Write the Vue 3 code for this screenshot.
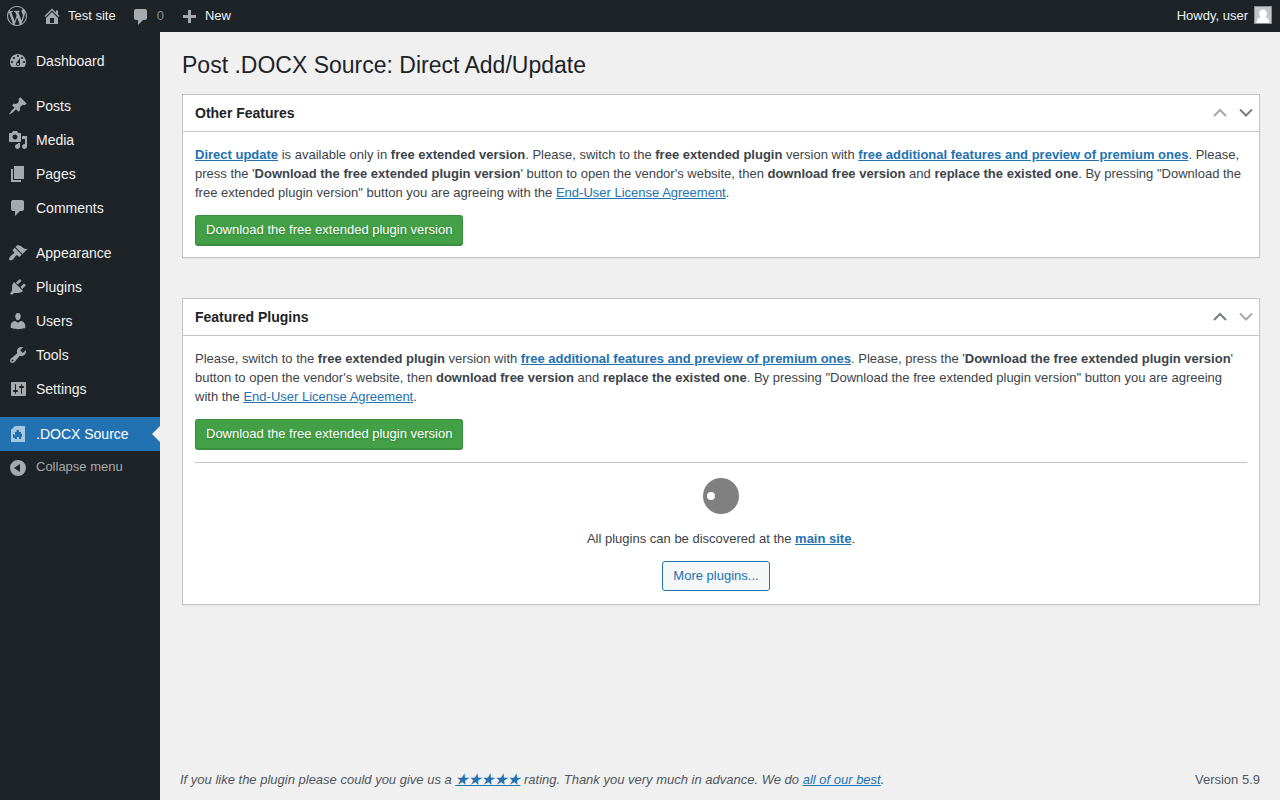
<script setup>
import { ref } from 'vue'

const commentPath = 'M5 2h9c1.1 0 2 .9 2 2v7c0 1.1-.9 2-2 2h-2l-5 5v-5H5c-1.1 0-2-.9-2-2V4c0-1.1.9-2 2-2z'
const plusPath = 'M17 7v3h-5v5H9v-5H4V7h5V2h3v5h5z'
const homePath = 'M16 8.5l1.53 1.53-1.06 1.06L10 4.6l-6.47 6.49-1.06-1.06L10 2.5l4 4v-2h2v4zm-6-2.46l6 5.99V18H4v-5.97zM12 17v-5H8v5h4z'
const wordpressPath = 'M20 10c0-5.51-4.49-10-10-10C4.48 0 0 4.49 0 10c0 5.52 4.48 10 10 10 5.51 0 10-4.48 10-10zM7.78 15.37L4.37 6.22c.55-.02 1.17-.08 1.17-.08.5-.06.44-1.13-.06-1.11 0 0-1.45.11-2.37.11-.18 0-.37 0-.58-.01C4.12 2.69 6.87 1.11 10 1.11c2.33 0 4.45.87 6.05 2.34-.68-.11-1.65.39-1.65 1.58 0 .74.45 1.36.9 2.1.35.61.55 1.36.55 2.46 0 1.49-1.4 5-1.4 5l-3.03-8.37c.54-.02.82-.17.82-.17.5-.05.44-1.25-.06-1.22 0 0-1.44.12-2.38.12-.87 0-2.33-.12-2.33-.12-.5-.03-.56 1.2-.06 1.22l.92.08 1.26 3.41zM17.41 10c.24-.64.74-1.87.43-4.25.7 1.29 1.05 2.71 1.05 4.25 0 3.29-1.73 6.24-4.4 7.78.97-2.59 1.94-5.2 2.92-7.78zM6.1 18.09C3.12 16.65 1.11 13.53 1.11 10c0-1.3.23-2.48.72-3.59C3.25 10.3 4.67 14.2 6.1 18.09zm4.03-6.63l2.58 6.98c-.86.29-1.76.45-2.71.45-.79 0-1.57-.11-2.29-.33.81-2.38 1.62-4.74 2.42-7.10z'

// menu groups, drawn with a gap between each one
const menu = [
  [
    {
      name: 'Dashboard',
      icon: 'M3.76 16h12.48c1.1-1.37 1.76-3.11 1.76-5 0-4.42-3.58-8-8-8s-8 3.58-8 8c0 1.89.66 3.63 1.76 5zM10 4c.55 0 1 .45 1 1s-.45 1-1 1-1-.45-1-1 .45-1 1-1zM6 6c.55 0 1 .45 1 1s-.45 1-1 1-1-.45-1-1 .45-1 1-1zm8 0c.55 0 1 .45 1 1s-.45 1-1 1-1-.45-1-1 .45-1 1-1zm-5.37 5.55L12 7v6c0 1.1-.9 2-2 2s-2-.9-2-2c0-.57.24-1.08.63-1.45zM4 10c.55 0 1 .45 1 1s-.45 1-1 1-1-.45-1-1 .45-1 1-1zm12 0c.55 0 1 .45 1 1s-.45 1-1 1-1-.45-1-1 .45-1 1-1zm-5 3c0-.55-.45-1-1-1s-1 .45-1 1 .45 1 1 1 1-.45 1-1z'
    }
  ],
  [
    {
      name: 'Posts',
      icon: 'M10.44 3.02l1.82-1.82 6.36 6.35-1.83 1.82c-1.05-.68-2.48-.57-3.41.36l-.75.75c-.92.93-1.04 2.35-.35 3.41l-1.83 1.82-2.41-2.41-2.8 2.79c-.42.42-3.38 2.71-3.8 2.29s1.86-3.39 2.28-3.81l2.79-2.79L4.1 9.36l1.83-1.82c1.05.69 2.48.57 3.4-.36l.75-.75c.93-.92 1.05-2.35.36-3.41z'
    },
    {
      name: 'Media',
      icon: 'M13 11V4c0-.55-.45-1-1-1h-1.67L9 1H5L3.67 3H2c-.55 0-1 .45-1 1v7c0 .55.45 1 1 1h10c.55 0 1-.45 1-1zM7 4.5c1.38 0 2.5 1.12 2.5 2.5S8.38 9.5 7 9.5 4.5 8.38 4.5 7 5.62 4.5 7 4.5zM14 6h5v10.5c0 1.38-1.12 2.5-2.5 2.5S14 17.88 14 16.5s1.12-2.5 2.5-2.5c.17 0 .34.02.5.05V9h-3V6zm-4 8.05V13h2v3.5c0 1.38-1.12 2.5-2.5 2.5S7 17.88 7 16.5 8.12 14 9.5 14c.17 0 .34.02.5.05z'
    },
    { name: 'Pages', icon: 'M6 15V2h10v13H6zm-1 1h8v2H3V5h2v11z' },
    { name: 'Comments', icon: commentPath }
  ],
  [
    {
      name: 'Appearance',
      icon: 'M14.48 11.06L7.41 3.99l1.5-1.5c.5-.56 2.3-.47 3.51.32 1.21.8 1.43 1.28 2.91 2.1 1.18.64 2.45 1.26 4.45.85zm-.71.71L6.7 4.7 4.93 6.47c-.39.39-.39 1.02 0 1.41l1.06 1.06c.39.39.39 1.03 0 1.42-.6.6-1.43 1.11-2.21 1.69-.35.26-.7.53-1.01.84C1.43 14.23.4 16.08 1.4 17.07c.99 1 2.84-.03 4.18-1.36.31-.31.58-.66.85-1.02.57-.78 1.08-1.61 1.69-2.21.39-.39 1.02-.39 1.41 0l1.06 1.06c.39.39 1.02.39 1.41 0z'
    },
    {
      name: 'Plugins',
      icon: 'M13.11 4.36L9.87 7.6 8 5.73l3.24-3.24c.35-.34 1.05-.2 1.56.32.52.51.66 1.21.31 1.55zm-8 1.77l.91-1.12 9.01 9.01-1.19.84c-.71.71-2.63 1.16-3.82 1.16H6.14L4.9 17.26c-.59.59-1.54.59-2.12 0-.59-.58-.59-1.53 0-2.12l1.24-1.24v-3.88c0-1.13.4-3.19 1.09-3.89zm7.26 3.97l3.24-3.24c.34-.35 1.04-.21 1.55.31.52.51.66 1.21.31 1.55l-3.24 3.25z'
    },
    {
      name: 'Users',
      icon: 'M10 9.25c-2.27 0-2.73-3.44-2.73-3.44C7 4.02 7.82 2 9.97 2c2.16 0 2.98 2.02 2.71 3.81 0 0-.41 3.44-2.68 3.44zm0 2.57L12.72 10c2.39 0 4.52 2.33 4.52 4.53v2.49s-3.65 1.13-7.24 1.13c-3.65 0-7.24-1.13-7.24-1.13v-2.49c0-2.25 1.94-4.48 4.47-4.48z'
    },
    {
      name: 'Tools',
      icon: 'M16.68 9.77c-1.34 1.34-3.3 1.67-4.95.99l-5.41 6.52c-.99.99-2.59.99-3.58 0s-.99-2.59 0-3.57l6.52-5.42c-.68-1.65-.35-3.61.99-4.95 1.28-1.28 3.12-1.62 4.72-1.06l-2.89 2.89 2.82 2.82 2.86-2.87c.53 1.58.18 3.39-1.08 4.65zM3.81 16.21c.4.39 1.04.39 1.43 0 .4-.4.4-1.04 0-1.43-.39-.4-1.03-.4-1.43 0-.39.39-.39 1.03 0 1.43z'
    },
    {
      name: 'Settings',
      icon: 'M18 16V4c0-.55-.45-1-1-1H4c-.55 0-1 .45-1 1v12c0 .55.45 1 1 1h13c.55 0 1-.45 1-1zM8 11h1c.55 0 1 .45 1 1s-.45 1-1 1H8v1.5c0 .28-.22.5-.5.5s-.5-.22-.5-.5V13H6c-.55 0-1-.45-1-1s.45-1 1-1h1V5.5c0-.28.22-.5.5-.5s.5.22.5.5V11zm5-2h-1c-.55 0-1-.45-1-1s.45-1 1-1h1V5.5c0-.28.22-.5.5-.5s.5.22.5.5V7h1c.55 0 1 .45 1 1s-.45 1-1 1h-1v5.500c0 .28-.22.5-.5.5s-.5-.22-.5-.5V9z'
    }
  ],
  [
    {
      name: '.DOCX Source',
      icon: 'M7 2h10v16H3V6zM8.500 6v2H7v3H6v-1H5v4h2v1h2v-2h2v2h2v-2h1v-3h-1V8h-2V6z'
    }
  ]
]

const current = ref('.DOCX Source')
</script>

<template>
  <div class="admin">
    <header class="adminBar">
      <a class="barItem logo" href="#" aria-label="About WordPress">
        <svg class="icon" viewBox="0 0 20 20"><path :d="wordpressPath" /></svg>
      </a>
      <a class="barItem" href="#">
        <svg class="icon" viewBox="0 0 20 20"><path :d="homePath" /></svg>
        Test site
      </a>
      <a class="barItem comments" href="#">
        <svg class="icon" viewBox="0 -1 20 20"><path :d="commentPath" /></svg>
        <span class="count">0</span>
      </a>
      <a class="barItem new" href="#">
        <svg class="icon" viewBox="0 -2 20 20"><path :d="plusPath" /></svg>
        New
      </a>
      <a class="barItem account" href="#">
        Howdy, user
        <svg class="avatar" viewBox="0 0 16 16">
          <rect width="16" height="16" fill="#c5c5c5" />
          <path fill="#fff" d="M8 2.600c2.400 0 3.900 1.700 3.900 4 0 1.500-.7 2.700-1.500 3.500 2.300.7 3.900 2.600 4.100 5.900h-13c.2-3.300 1.800-5.200 4.100-5.900-.8-.8-1.500-2-1.500-3.500 0-2.300 1.500-4 3.900-4z" />
        </svg>
      </a>
    </header>

    <div class="main">
      <nav class="sideMenu">
        <ul v-for="(group, i) in menu" :key="i" class="menuGroup">
          <li v-for="item in group" :key="item.name">
            <a
              href="#"
              class="menuItem"
              :class="{ current: item.name === current }"
              @click.prevent="current = item.name"
            >
              <svg class="icon" viewBox="0 0 20 20"><path fill-rule="evenodd" :d="item.icon" /></svg>
              {{ item.name }}
            </a>
          </li>
        </ul>
        <button class="collapse" type="button">
          <svg class="icon" viewBox="0 0 20 20">
            <path fill-rule="evenodd" d="M10 2a8 8 0 1 1 0 16 8 8 0 0 1 0-16zM12 6v8l-6-4z" />
          </svg>
          <span>Collapse menu</span>
        </button>
      </nav>

      <div class="content">
        <main class="wrap">
          <h1>Post .DOCX Source: Direct Add/Update</h1>

          <section class="postbox">
            <div class="postboxHeader">
              <h2>Other Features</h2>
              <div class="orderButtons">
                <button type="button" disabled aria-label="Move up">
                  <svg viewBox="0 0 16 16"><path d="M2 11l6-6 6 6" /></svg>
                </button>
                <button type="button" aria-label="Move down">
                  <svg viewBox="0 0 16 16"><path d="M2 4.500l6 6 6-6" /></svg>
                </button>
              </div>
            </div>
            <div class="inside">
              <p>
                <a href="#"><b>Direct update</b></a> is available only in <b>free extended version</b>.
                Please, switch to the <b>free extended plugin</b> version with
                <a href="#"><b>free additional features and preview of premium ones</b></a>.
                Please, press the '<b>Download the free extended plugin version</b>' button to open the vendor's website,
                then <b>download free version</b> and <b>replace the existed one</b>.
                By pressing "Download the free extended plugin version" button you are agreeing with the
                <a href="#">End-User License Agreement</a>.
              </p>
              <button class="download" type="button">Download the free extended plugin version</button>
            </div>
          </section>

          <section class="postbox">
            <div class="postboxHeader">
              <h2>Featured Plugins</h2>
              <div class="orderButtons">
                <button type="button" aria-label="Move up">
                  <svg viewBox="0 0 16 16"><path d="M2 11l6-6 6 6" /></svg>
                </button>
                <button type="button" disabled aria-label="Move down">
                  <svg viewBox="0 0 16 16"><path d="M2 4.500l6 6 6-6" /></svg>
                </button>
              </div>
            </div>
            <div class="inside">
              <p>
                Please, switch to the <b>free extended plugin</b> version with
                <a href="#"><b>free additional features and preview of premium ones</b></a>.
                Please, press the '<b>Download the free extended plugin version</b>' button to open the vendor's website,
                then <b>download free version</b> and <b>replace the existed one</b>.
                By pressing "Download the free extended plugin version" button you are agreeing with the
                <a href="#">End-User License Agreement</a>.
              </p>
              <button class="download" type="button">Download the free extended plugin version</button>
              <div class="discover">
                <svg class="spinner" viewBox="0 0 36 36">
                  <circle cx="18" cy="18" r="18" fill="#808080" />
                  <circle cx="8" cy="18" r="4" fill="#fff" />
                </svg>
                <p>All plugins can be discovered at the <a href="#"><b>main site</b></a>.</p>
                <button class="more" type="button">More plugins...</button>
              </div>
            </div>
          </section>
        </main>

        <footer class="footer">
          <em>
            If you like the plugin please could you give us a
            <a href="#" class="stars">★★★★★</a>
            rating. Thank you very much in advance. We do <a href="#">all of our best</a>.
          </em>
          <span>Version 5.9</span>
        </footer>
      </div>
    </div>
  </div>
</template>

<style>
body {
  margin: 0;
  background: #f0f0f1;
}
</style>

<style scoped>
.admin {
  display: flex;
  flex-direction: column;
  min-height: 100vh;
  color: #3c434a;
  background: #f0f0f1;
  font-family: "Liberation Sans", Arial, sans-serif;
  font-size: 13px;
  line-height: 19px;
}
button {
  font-family: inherit;
  font-size: 13px;
  cursor: pointer;
}
a {
  color: #2271b1;
}
.icon {
  flex: none;
  width: 20px;
  height: 20px;
  fill: #a7aaad;
}

/* top bar */
.adminBar {
  display: flex;
  height: 32px;
  padding-right: 8px;
  background: #1d2327;
}
.barItem {
  display: flex;
  align-items: center;
  gap: 6px;
  padding: 0 8px;
  color: #f0f0f1;
  line-height: 32px;
  text-decoration: none;
}
.logo {
  padding: 0 7px;
}
.count {
  color: #8c8f94;
}
.comments,
.new {
  padding-left: 7px;
}
.account {
  margin-left: auto;
  padding: 0;
}
.avatar {
  width: 16px;
  height: 16px;
  margin-bottom: 2px;
  border: 1px solid #8c8f94;
}

/* left menu */
.main {
  display: flex;
  flex: 1;
}
.sideMenu {
  flex: none;
  width: 160px;
  padding-top: 12px;
  background: #1d2327;
}
.menuGroup {
  margin: 0;
  padding: 0;
  list-style: none;
}
.menuGroup + .menuGroup {
  margin-top: 11px;
}
.menuItem,
.collapse {
  position: relative;
  display: flex;
  align-items: center;
  gap: 8px;
  height: 34px;
  padding: 0 8px;
  color: #f0f0f1;
  font-size: 14px;
  text-decoration: none;
}
.current {
  color: #fff;
  background: #2271b1;
}
.current .icon {
  fill: #a7c6e0;
}
.current::after {
  content: "";
  position: absolute;
  top: 9px;
  right: 0;
  border: 8px solid transparent;
  border-left: 0;
  border-right-color: #f0f0f1;
}
.collapse {
  width: 100%;
  border: 0;
  background: none;
  color: #a7aaad;
  font-size: 13px;
}
.collapse span {
  padding-bottom: 3px;
}

/* page */
.content {
  display: flex;
  flex: 1;
  flex-direction: column;
  min-width: 0;
  padding: 0 20px;
}
.wrap {
  flex: 1;
  padding: 18px 0 20px 2px;
}
h1 {
  margin: 0 0 14px;
  color: #1d2327;
  font-size: 23px;
  font-weight: 400;
  line-height: 30px;
}
.postbox {
  margin-bottom: 40px;
  border: 1px solid #c3c4c7;
  background: #fff;
  box-shadow: 0 1px 1px rgba(0, 0, 0, 0.04);
}
.postboxHeader {
  display: flex;
  align-items: center;
  justify-content: space-between;
  height: 36px;
  padding-left: 12px;
  border-bottom: 1px solid #c3c4c7;
}
h2 {
  margin: 0;
  color: #1d2327;
  font-size: 14px;
}
.orderButtons {
  display: flex;
}
.orderButtons button {
  display: flex;
  align-items: center;
  justify-content: center;
  width: 26px;
  height: 36px;
  padding: 0;
  border: 0;
  background: none;
}
.orderButtons svg {
  width: 16px;
  height: 16px;
  fill: none;
  stroke: #787c82;
  stroke-width: 2;
}
.orderButtons button:disabled svg {
  stroke: #a7aaad;
}
.inside {
  padding: 13px 12px 11px;
}
p {
  margin: 0 0 13px;
}
.download {
  display: block;
  height: 31px;
  padding: 0 10px 2px;
  border: 1px solid #388e3c;
  border-bottom-width: 2px;
  border-radius: 3px;
  background: #43a047;
  color: #fff;
  text-shadow: 0 1px 2px #2e7d32;
}
.discover {
  display: flex;
  flex-direction: column;
  align-items: center;
  margin-top: 12px;
  padding: 15px 0 2px;
  border-top: 1px solid #c3c4c7;
}
.spinner {
  width: 36px;
  height: 36px;
  margin-bottom: 15px;
}
.more {
  height: 30px;
  margin-right: 10px;
  padding: 0 10px 2px;
  border: 1px solid #2271b1;
  border-radius: 3px;
  background: #f6f7f7;
  color: #2271b1;
}
.footer {
  display: flex;
  justify-content: space-between;
  padding: 10px 0 11px;
  color: #50575e;
}
.stars {
  font-family: "Liberation Sans", "Noto Sans CJK SC", sans-serif;
}
</style>
